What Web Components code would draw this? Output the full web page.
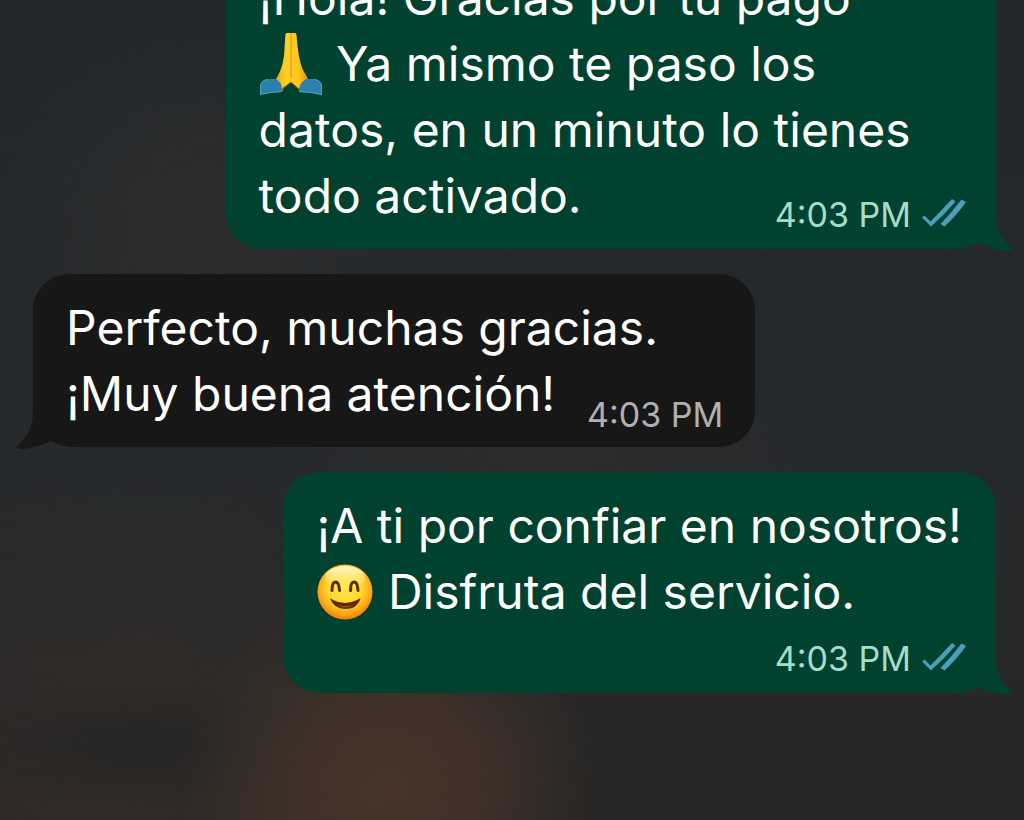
<!DOCTYPE html>
<html lang="es">
<head>
<meta charset="utf-8">
<meta name="viewport" content="width=device-width, initial-scale=1">
<title>Chat</title>
<style>
  html, body { margin: 0; height: 100%; background: #272829; }
  body { font-family: Inter, "Liberation Sans", sans-serif; color: #fff; overflow: hidden; }
</style>
</head>
<body>
<chat-thread>
  <chat-bubble side="out" time="4:03 PM" read style="--width: 80%">¡Hola! Gracias por tu pago<br><emoji-pray></emoji-pray> Ya mismo te paso los<br>datos, en un minuto lo tienes<br>todo activado.</chat-bubble>
  <chat-bubble side="in" time="4:03 PM" style="--width: 75%">Perfecto, muchas gracias.<br>¡Muy buena atención!</chat-bubble>
  <chat-bubble side="out" time="4:03 PM" read stacked style="--width: 74%">¡A ti por confiar en nosotros!<br><emoji-smile></emoji-smile> Disfruta del servicio.</chat-bubble>
</chat-thread>

<script>
const define = (name, html, setup) => {
  const template = document.createElement('template');
  template.innerHTML = html;
  customElements.define(name, class extends HTMLElement {
    constructor() {
      super();
      this.attachShadow({ mode: 'open' }).append(template.content.cloneNode(true));
    }
    connectedCallback() { if (setup) setup(this, this.shadowRoot); }
  });
};

define('chat-thread', `
  <style>
    :host {
      display: flex; flex-direction: column; justify-content: flex-end; gap: 25px;
      box-sizing: border-box; height: 100vh; padding: 0 28px 127px 33px; overflow: hidden;
      background:
        radial-gradient(ellipse 20% 24% at 38% 96%, #463429 0%, rgba(70,52,41,.75) 45%, rgba(70,52,41,0) 100%),
        radial-gradient(ellipse 22% 8% at 14% 91%, #262625 0%, rgba(38,38,37,0) 100%),
        radial-gradient(ellipse 34% 22% at 10% 100%, #332a27 0%, rgba(51,42,39,0) 100%),
        radial-gradient(ellipse 34% 24% at 14% 80%, rgba(48,45,42,.7) 0%, rgba(48,45,42,0) 100%),
        radial-gradient(ellipse 20% 24% at 20% 28%, #2e2d2d 0%, rgba(46,45,45,0) 100%),
        radial-gradient(ellipse 30% 14% at 54% 55%, #2d2c2c 0%, rgba(45,44,44,0) 100%),
        linear-gradient(#23282b 0%, #25292c 55%, #292829 75%, #272625 100%);
    }
  </style>
  <slot></slot>`);

define('chat-bubble', `
  <style>
    :host {
      --fill: #00412f; --meta: #a5dccb;
      display: grid; position: relative; isolation: isolate; flex: none; align-self: flex-end;
      box-sizing: border-box; width: var(--width); padding: 21px 32px 20px 33px;
      border-radius: 36px; background: var(--fill);
    }
    :host([side="in"]) { --fill: #171717; --meta: #b0b0b0; align-self: flex-start; }
    p { grid-area: 1 / 1; margin: 0; font-size: 48px; line-height: 66px; white-space: nowrap; }
    footer {
      grid-area: 1 / 1; place-self: end; display: flex; align-items: center; gap: 10px;
      font-size: 34px; line-height: 24px; color: var(--meta);
    }
    :host([side="out"]) footer { margin: 0 -3px 2px 0; }
    :host([stacked]) footer { grid-area: 2 / 1; padding-top: 22px; }
    .ticks { width: 46px; height: 30px; margin: -5px 0 -1px; }
    .ticks[hidden] { display: none; }
    .tail { position: absolute; z-index: -1; right: -17px; bottom: -2px; width: 62px; height: 70px; }
    .tail .body { fill: var(--fill); }
    .tail .notch { fill: #28292a; }
    :host([side="in"]) .tail { right: auto; left: -17px; transform: scaleX(-1); }
  </style>
  <p><slot></slot></p>
  <footer>
    <time></time>
    <svg class="ticks" viewBox="0 0 46 30" fill="#4a9fbd" role="img" aria-label="Leído">
      <path d="M1 19.500 L3.500 17.500 L9.500 23.500 Q20 13 31 1 L34.500 3.500 Q24 16 10 28.500 Z"/>
      <path d="M19.500 26 Q31 14 40.500 1.500 L45 4 Q36 17 23.500 28.500 Z"/>
    </svg>
  </footer>
  <svg class="tail" viewBox="0 0 62 70" aria-hidden="true">
    <path class="body" d="M0 68 Q16 67 27 63 Q41 69 55 70 Q60 70 62 68 Q45 54 45 34 V0 L0 30 Z"/>
    <path class="notch" d="M0 69 Q17 68 27 62 Q37 67 48 69 Z"/>
  </svg>`,
  (host, root) => {
    root.querySelector('time').textContent = host.getAttribute('time');
    if (!host.hasAttribute('read')) root.querySelector('.ticks').setAttribute('hidden', '');
  });

define('emoji-pray', `
  <style>
    :host { display: inline-block; width: 64px; height: 64px; vertical-align: -15px; }
    svg { display: block; width: 100%; height: 100%; }
  </style>
  <svg viewBox="0 0 64 64" role="img" aria-label="🙏">
    <defs><linearGradient id="g" x1="0" x2="1">
      <stop offset="0" stop-color="#eda813"/><stop offset=".3" stop-color="#ffcf25"/>
      <stop offset=".7" stop-color="#ffc81e"/><stop offset="1" stop-color="#dd9410"/>
    </linearGradient></defs>
    <path fill="url(#g)" d="M26.500 2 Q26.500 1 28 1 H36 Q37.500 1 37.500 3 Q39 27 44 38 Q47 43 49 47 L41 60 L40 57 L32 50 L24 56 L23 60 L17 47 Q23 38 25 24 Z"/>
    <path fill="none" stroke="#d69518" d="M32 2 V46"/>
    <path fill="none" stroke="#bd7710" d="M23 59 L24 56 L32 50 L40 57 L41 59"/>
    <path fill="#2e80ac" d="M1 63 V54 Q2 48 9 47 H17 Q22 50 23 56 V60 Q11 60 1 63 Z M63 63 V54 Q62 48 55 47 H47 Q42 50 40 56 V60 Q52 60 63 63 Z"/>
    <path fill="none" stroke="#4ba0bd" d="M1.500 62 V54 Q2 48 9 47.500 M62.500 62 V54 Q62 48 55 47.500 M1 62.500 Q12 60 23 59.500 M40 59.500 Q53 60 63 62.500"/>
  </svg>`);

define('emoji-smile', `
  <style>
    :host { display: inline-block; width: 58px; height: 58px; vertical-align: -12px; }
    svg { display: block; width: 100%; height: 100%; }
  </style>
  <svg viewBox="0 0 58 58" role="img" aria-label="😊">
    <defs>
      <radialGradient id="f" cx=".5" cy=".42" r=".58">
        <stop offset="0" stop-color="#ffe84a"/><stop offset=".55" stop-color="#ffd530"/>
        <stop offset=".8" stop-color="#ffac16"/><stop offset="1" stop-color="#f57908"/>
      </radialGradient>
      <linearGradient id="h" x2="0" y2="1"><stop stop-color="#fffad0"/><stop offset="1" stop-color="#fff090" stop-opacity="0"/></linearGradient>
    </defs>
    <circle cx="29" cy="29" r="27.500" fill="url(#f)"/>
    <ellipse cx="29" cy="15" rx="20" ry="12" fill="url(#h)"/>
    <path fill="none" stroke="#5d2c05" stroke-width="3" stroke-linecap="round" d="M16 27.500 Q16 19 19.500 19 Q23 19 23.500 27.500 M34.500 27.500 Q34.500 19 38 19 Q41.500 19 42 27.500"/>
    <path fill="#5d2c05" d="M14 35.500 Q15 35 17 37 Q29 43 41 37 Q44 34.500 44.500 36 Q41 46 29 46 Q18 46 14 35.500 Z"/>
    <path fill="#9c4b10" d="M22 42.500 Q29 43.500 37 42 Q34 44.500 29 44.500 Q25 44.500 22 42.500 Z"/>
  </svg>`);
</script>
</body>
</html>
